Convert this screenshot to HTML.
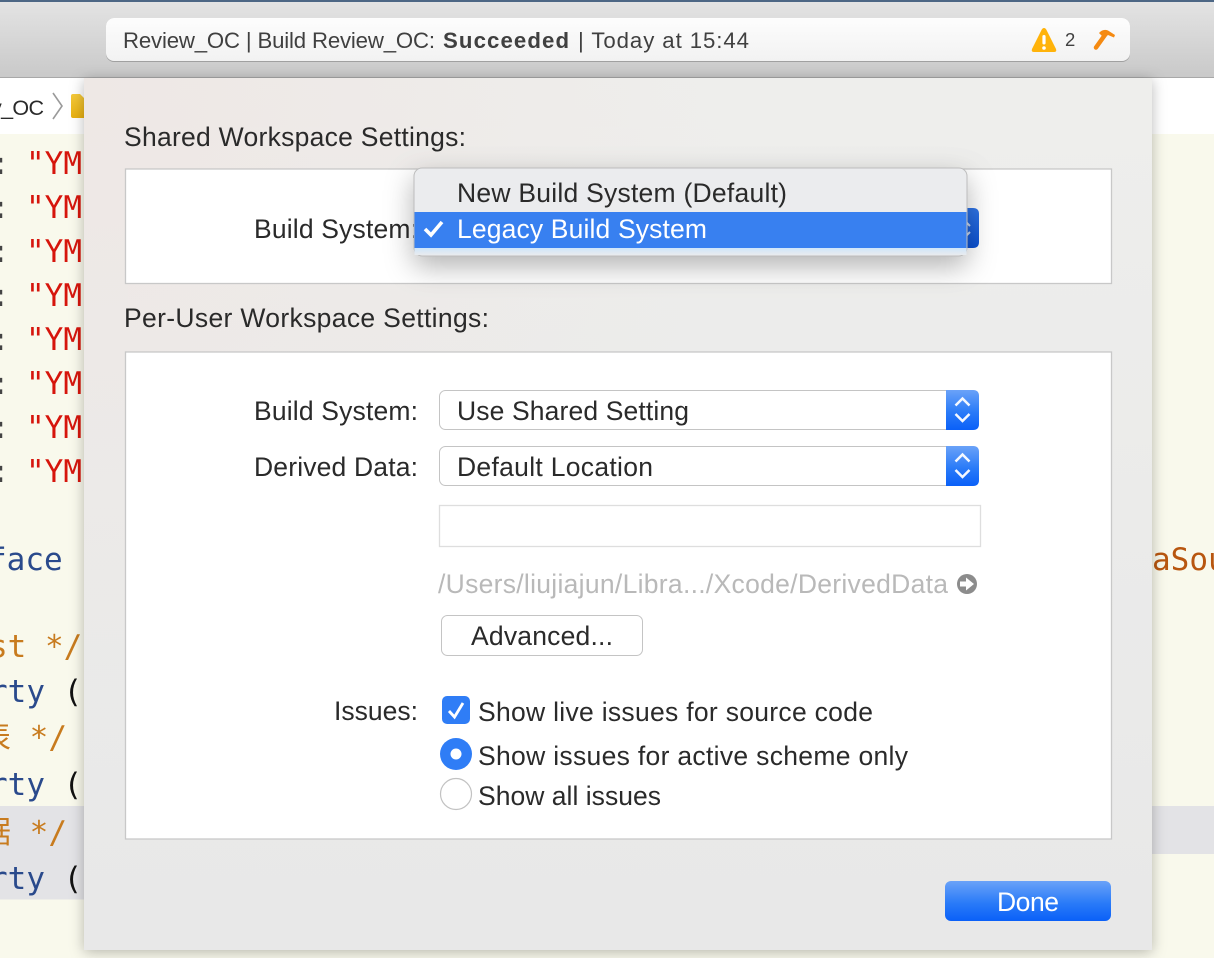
<!DOCTYPE html>
<html><head><meta charset="utf-8"><style>
html,body{margin:0;padding:0;background:#f9f9ec;width:1214px;height:958px;overflow:hidden}
svg{display:block}
text{font-family:"Liberation Sans","Noto Sans CJK SC",sans-serif;fill:#2a2a2a;font-size:26.5px}
.m{font-family:"DejaVu Sans Mono","Noto Sans CJK SC",monospace;font-size:31px}
.t{font-size:22.2px;fill:#404040}
</style></head><body>
<svg width="1214" height="958" viewBox="0 0 1214 958" xmlns="http://www.w3.org/2000/svg">
<defs>
<linearGradient id="bar" x1="0" y1="0" x2="0" y2="1"><stop offset="0" stop-color="#e4e4e4"/><stop offset="1" stop-color="#c9c9c9"/></linearGradient>
<linearGradient id="fld" x1="0" y1="0" x2="0" y2="1"><stop offset="0" stop-color="#fdfdfd"/><stop offset="1" stop-color="#f2f2f2"/></linearGradient>
<linearGradient id="pan" x1="0" y1="0" x2="0" y2="1"><stop offset="0" stop-color="#eeeeec"/><stop offset=".5" stop-color="#ebebea"/><stop offset="1" stop-color="#e8e8e8"/></linearGradient>
<radialGradient id="pan2" gradientUnits="userSpaceOnUse" cx="84" cy="100" r="640"><stop offset="0" stop-color="#eee5e2" stop-opacity=".7"/><stop offset="1" stop-color="#eee5e2" stop-opacity="0"/></radialGradient>
<linearGradient id="blu" x1="0" y1="0" x2="0" y2="1"><stop offset="0" stop-color="#6aa2f8"/><stop offset=".55" stop-color="#2a7bf8"/><stop offset="1" stop-color="#0a60f8"/></linearGradient>
<linearGradient id="blu2" x1="0" y1="0" x2="0" y2="1"><stop offset="0" stop-color="#2f74e6"/><stop offset="1" stop-color="#0a50d0"/></linearGradient>
<linearGradient id="fold" x1="0" y1="0" x2="0" y2="1"><stop offset="0" stop-color="#f5c93a"/><stop offset="1" stop-color="#e8b010"/></linearGradient>
<linearGradient id="strip" x1="0" y1="0" x2="0" y2="1"><stop offset="0" stop-color="#cfe6fb"/><stop offset="1" stop-color="#e9ebee"/></linearGradient>
<filter id="sh" x="-10%" y="-10%" width="120%" height="120%"><feDropShadow dx="0" dy="2" stdDeviation="7" flood-color="#000" flood-opacity=".28"/></filter>
<filter id="sh2" x="-20%" y="-50%" width="140%" height="220%"><feDropShadow dx="0" dy="10" stdDeviation="14" flood-color="#000" flood-opacity=".3"/></filter>
</defs>

<!-- editor background -->
<rect x="0" y="134" width="1214" height="824" fill="#f9f9ec"/>
<rect x="0" y="78" width="1214" height="56" fill="#ffffff"/>
<rect x="0" y="806" width="84" height="93.500" fill="#e3e3e6"/>
<rect x="1152" y="806" width="62" height="48" fill="#e3e3e6"/>

<!-- code -->
<text class="m" x="-9" y="174" style="fill:#444">:</text>
<text class="m" x="-9" y="218" style="fill:#444">:</text>
<text class="m" x="-9" y="262" style="fill:#444">:</text>
<text class="m" x="-9" y="306" style="fill:#444">:</text>
<text class="m" x="-9" y="350" style="fill:#444">:</text>
<text class="m" x="-9" y="394" style="fill:#444">:</text>
<text class="m" x="-9" y="438" style="fill:#444">:</text>
<text class="m" x="-9" y="482" style="fill:#444">:</text>
<text class="m" x="26" y="174" style="fill:#d6150c">"YM</text>
<text class="m" x="26" y="218" style="fill:#d6150c">"YM</text>
<text class="m" x="26" y="262" style="fill:#d6150c">"YM</text>
<text class="m" x="26" y="306" style="fill:#d6150c">"YM</text>
<text class="m" x="26" y="350" style="fill:#d6150c">"YM</text>
<text class="m" x="26" y="394" style="fill:#d6150c">"YM</text>
<text class="m" x="26" y="438" style="fill:#d6150c">"YM</text>
<text class="m" x="26" y="482" style="fill:#d6150c">"YM</text>
<text class="m" x="-12" y="570" style="fill:#2a4a8c">face</text>
<text class="m" x="-11" y="657" style="fill:#c87b1e">st */</text>
<text class="m" x="-11" y="702" style="fill:#2a4a8c">rty <tspan style="fill:#111">(</tspan></text>
<text class="m" x="-20" y="748" style="fill:#c87b1e">表 */</text>
<text class="m" x="-11" y="795" style="fill:#2a4a8c">rty <tspan style="fill:#111">(</tspan></text>
<text class="m" x="-20" y="843" style="fill:#c87b1e">据 */</text>
<text class="m" x="-11" y="889" style="fill:#2a4a8c">rty <tspan style="fill:#111">(</tspan></text>
<text class="m" x="1152" y="570" style="fill:#b8560f">aSou</text>

<!-- breadcrumb -->
<text x="-9" y="115" textLength="53" lengthAdjust="spacing" style="font-size:21.500px">y_OC</text>
<path d="M53 93 L62 106 L53 119" fill="none" stroke="#9a9a9a" stroke-width="1.600"/>
<path d="M71 96 Q71 94 73 94 L80 94 L84 98 L84 118 L73 118 Q71 118 71 116 Z" fill="url(#fold)"/>

<!-- toolbar -->
<rect x="0" y="0" width="1214" height="77" fill="url(#bar)"/>
<rect x="0" y="0" width="1214" height="2" fill="#4d6785"/>
<rect x="0" y="77" width="1214" height="1" fill="#a8a8a8"/>
<rect x="106" y="18" width="1024" height="44" rx="8" fill="#a0a0a0"/>
<rect x="106" y="18" width="1024" height="43" rx="8" fill="url(#fld)"/>
<text class="t" x="123" y="48" textLength="312" lengthAdjust="spacing">Review_OC | Build Review_OC:</text>
<text class="t" x="443" y="48" textLength="126" lengthAdjust="spacing" style="font-weight:700">Succeeded</text>
<text class="t" x="578" y="48" textLength="171" lengthAdjust="spacing">| Today at 15:44</text>
<path d="M1044 28 Q1045.500 28 1046.500 30 L1056 49 Q1057 52 1054 52 L1034 52 Q1031 52 1032 49 L1041.500 30 Q1042.500 28 1044 28 Z" fill="#ffb30a"/>
<rect x="1042.400" y="35" width="3.200" height="9.500" rx="1.600" fill="#fff"/>
<circle cx="1044" cy="48" r="1.800" fill="#fff"/>
<text x="1065" y="46" style="font-size:18.5px;fill:#404040">2</text>
<path d="M1096 47.500 L1106 33.500" stroke="#f58a12" stroke-width="4.500" stroke-linecap="round" fill="none"/>
<path d="M1099 33 Q1103 28.500 1108 30.500 L1115 35 L1114 37.500 L1108 35 L1104 38 Z" fill="#f58a12"/>

<!-- panel -->
<rect x="84" y="78" width="1068" height="872" fill="url(#pan)" filter="url(#sh)"/>
<rect x="84" y="78" width="1068" height="872" fill="url(#pan2)"/>

<text x="124" y="146" textLength="342" lengthAdjust="spacing">Shared Workspace Settings:</text>
<rect x="125.500" y="169" width="986" height="114.500" fill="#fff" stroke="#c8c8c8" stroke-width="1.300"/>
<text x="254" y="238" textLength="164" lengthAdjust="spacing">Build System:</text>

<text x="124" y="327" textLength="365" lengthAdjust="spacing">Per-User Workspace Settings:</text>
<rect x="125.500" y="352" width="986" height="487" fill="#fff" stroke="#c8c8c8" stroke-width="1.300"/>

<!-- stepper behind popup -->
<path d="M960 208 L973 208 Q979 208 979 214 L979 242 Q979 248 973 248 L960 248 Z" fill="url(#blu2)"/>
<path d="M966 222 L970 226 M970 232 L966 236" stroke="#c4d6f2" stroke-width="2" fill="none"/>

<!-- popup -->
<rect x="414" y="168" width="553" height="88" rx="8" fill="#ebecee" stroke="#bdbdbd" stroke-width="1" filter="url(#sh2)"/>
<rect x="414.500" y="212" width="552" height="36" fill="#3880f0"/>
<rect x="414.500" y="248" width="552" height="7" fill="url(#strip)"/>
<text x="457" y="202" textLength="330" lengthAdjust="spacing">New Build System (Default)</text>
<text x="457" y="238" textLength="250" lengthAdjust="spacing" style="fill:#fff">Legacy Build System</text>
<path d="M425 229 L431 235 L442 222" fill="none" stroke="#fff" stroke-width="3.600"/>

<!-- selects -->
<text x="254" y="420" textLength="164" lengthAdjust="spacing">Build System:</text>
<rect x="439.500" y="390.500" width="539" height="39" rx="6" fill="#fff" stroke="#c4c4c4"/>
<path d="M946 390 L973 390 Q979 390 979 396 L979 424 Q979 430 973 430 L946 430 Z" fill="url(#blu)"/>
<path d="M955.500 405.500 L962.500 398.500 L969.500 405.500 M955.500 414 L962.500 421 L969.500 414" fill="none" stroke="#f4f8ff" stroke-width="2.500"/>
<text x="457" y="420" textLength="232" lengthAdjust="spacing">Use Shared Setting</text>

<text x="254" y="476" textLength="164" lengthAdjust="spacing">Derived Data:</text>
<rect x="439.500" y="446.500" width="539" height="39" rx="6" fill="#fff" stroke="#c4c4c4"/>
<path d="M946 446 L973 446 Q979 446 979 452 L979 480 Q979 486 973 486 L946 486 Z" fill="url(#blu)"/>
<path d="M955.500 461.500 L962.500 454.500 L969.500 461.500 M955.500 470 L962.500 477 L969.500 470" fill="none" stroke="#f4f8ff" stroke-width="2.500"/>
<text x="457" y="476" textLength="196" lengthAdjust="spacing">Default Location</text>

<rect x="439.500" y="505.500" width="541" height="41" fill="#fff" stroke="#dedede" stroke-width="1.300"/>
<text x="438" y="593" textLength="510" lengthAdjust="spacing" style="fill:#b9b9b9">/Users/liujiajun/Libra.../Xcode/DerivedData</text>
<circle cx="967" cy="584" r="10" fill="#8c8c8c"/>
<path d="M960 581.500 L966 581.500 L966 577.500 L974 584 L966 590.500 L966 586.500 L960 586.500 Z" fill="#fff"/>

<rect x="441.500" y="615.500" width="201" height="40" rx="6" fill="#fff" stroke="#c4c4c4"/>
<text x="471" y="645" textLength="142" lengthAdjust="spacing">Advanced...</text>

<!-- issues -->
<text x="334" y="720" textLength="84" lengthAdjust="spacing">Issues:</text>
<rect x="442" y="696" width="28" height="28" rx="5" fill="#2f7df6"/>
<path d="M449 711 L454.500 717 L463 703" fill="none" stroke="#fff" stroke-width="2.800"/>
<text x="478" y="721" textLength="395" lengthAdjust="spacing">Show live issues for source code</text>
<circle cx="456" cy="754" r="16" fill="#2f7df6"/>
<circle cx="456" cy="754" r="5.500" fill="#fff"/>
<text x="478" y="765" textLength="430" lengthAdjust="spacing">Show issues for active scheme only</text>
<circle cx="456" cy="794" r="15.500" fill="#fff" stroke="#c2c2c2" stroke-width="1.200"/>
<text x="478" y="805" textLength="183" lengthAdjust="spacing">Show all issues</text>

<!-- done -->
<rect x="945" y="881" width="166" height="40" rx="6" fill="url(#blu)"/>
<text x="997" y="911" textLength="62" lengthAdjust="spacing" style="fill:#fff">Done</text>
</svg>
</body></html>
